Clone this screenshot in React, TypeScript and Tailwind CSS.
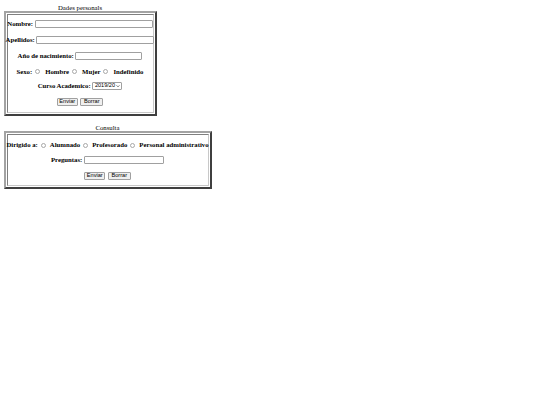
import React from "react";

function Radio() {
  return (
    <span className="inline-block w-[5px] h-[5px] shrink-0 rounded-full border border-[#a8a8a8] bg-white" />
  );
}

function TextBox({ width }: { width: string }) {
  return (
    <span
      className={`inline-block h-[8px] shrink-0 rounded-[1px] border border-[#a0a0a0] bg-white ${width}`}
    />
  );
}

function Buttons() {
  return (
    <div className="flex h-[8.5px] items-stretch justify-center gap-[2.5px] font-['Liberation_Sans',Arial,sans-serif] text-[5.6px] font-normal">
      <span className="flex w-[21px] items-center justify-center rounded-[1px] border border-[#a0a0a0] bg-[#efefef]">
        Enviar
      </span>
      <span className="flex w-[23px] items-center justify-center rounded-[1px] border border-[#a0a0a0] bg-[#efefef]">
        Borrar
      </span>
    </div>
  );
}

function Frame({ width, children }: { width: string; children: React.ReactNode }) {
  return (
    <div
      className={`border-2 border-t-[#a3a3a3] border-l-[#a3a3a3] border-r-[#3f3f3f] border-b-[#3f3f3f] p-px ${width}`}
    >
      <div className="border border-t-[#808080] border-l-[#808080] border-r-[#c8c8c8] border-b-[#c8c8c8]">
        {children}
      </div>
    </div>
  );
}

const Row = ({ className, children }: { className: string; children: React.ReactNode }) => (
  <div className={`flex h-[8px] items-center justify-center whitespace-nowrap font-bold ${className}`}>
    {children}
  </div>
);

export default function App() {
  return (
    <div className="h-[405px] w-[540px] bg-white pl-[3.5px] pt-[3.5px] font-['Liberation_Serif','Times_New_Roman',serif] text-[6.75px] leading-[7.6px] text-black">
      {/* Dades personals */}
      <div className="w-[153px]">
        <div className="h-[7.6px] text-center">Dades personals</div>
        <Frame width="w-[153px]">
          <div className="flex flex-col pt-[5px] pb-[5.5px]">
            <Row className="gap-[1.7px]">
              <span>Nombre:</span>
              <TextBox width="w-[118px]" />
            </Row>
            <Row className="mt-[8px] gap-[1.7px]">
              <span>Apellidos:</span>
              <TextBox width="w-[118px]" />
            </Row>
            <Row className="mt-[8px] gap-[1.7px]">
              <span>Año de nacimiento:</span>
              <TextBox width="w-[67px]" />
            </Row>
            <Row className="mt-[7.5px]">
              <span>Sexo:</span>
              <span className="ml-[2.5px] mr-[5.5px] flex"><Radio /></span>
              <span>Hombre</span>
              <span className="ml-[2.5px] mr-[5.5px] flex"><Radio /></span>
              <span>Mujer</span>
              <span className="ml-[2.5px] mr-[5.5px] flex"><Radio /></span>
              <span>Indefinido</span>
            </Row>
            <Row className="mt-[6.5px] gap-[1.7px]">
              <span>Curso Academico:</span>
              <span className="flex h-[8.5px] w-[30px] items-center justify-between rounded-[1px] border border-[#a0a0a0] bg-white pl-[1.5px] pr-[1px] font-['Liberation_Sans',Arial,sans-serif] text-[5.6px] font-normal">
                2019/20
                <svg viewBox="0 0 10 10" className="h-[4px] w-[4px]">
                  <path d="M1.5 3.5 L5 7 L8.5 3.5" fill="none" stroke="#222" strokeWidth="1.6" />
                </svg>
              </span>
            </Row>
            <div className="mt-[7.5px]">
              <Buttons />
            </div>
          </div>
        </Frame>
      </div>

      {/* Consulta */}
      <div className="mt-[8px] w-[208px]">
        <div className="h-[7.6px] text-center">Consulta</div>
        <Frame width="w-[208px]">
          <div className="flex flex-col pt-[6px] pb-[5px]">
            <Row className="">
              <span>Dirigido a:</span>
              <span className="ml-[3px] mr-[4px] flex"><Radio /></span>
              <span>Alumnado</span>
              <span className="ml-[3px] mr-[4px] flex"><Radio /></span>
              <span>Profesorado</span>
              <span className="ml-[3px] mr-[4px] flex"><Radio /></span>
              <span>Personal administrativo</span>
            </Row>
            <Row className="mt-[7px] gap-[1.7px]">
              <span>Preguntas:</span>
              <TextBox width="w-[80px]" />
            </Row>
            <div className="mt-[7.75px]">
              <Buttons />
            </div>
          </div>
        </Frame>
      </div>
    </div>
  );
}
